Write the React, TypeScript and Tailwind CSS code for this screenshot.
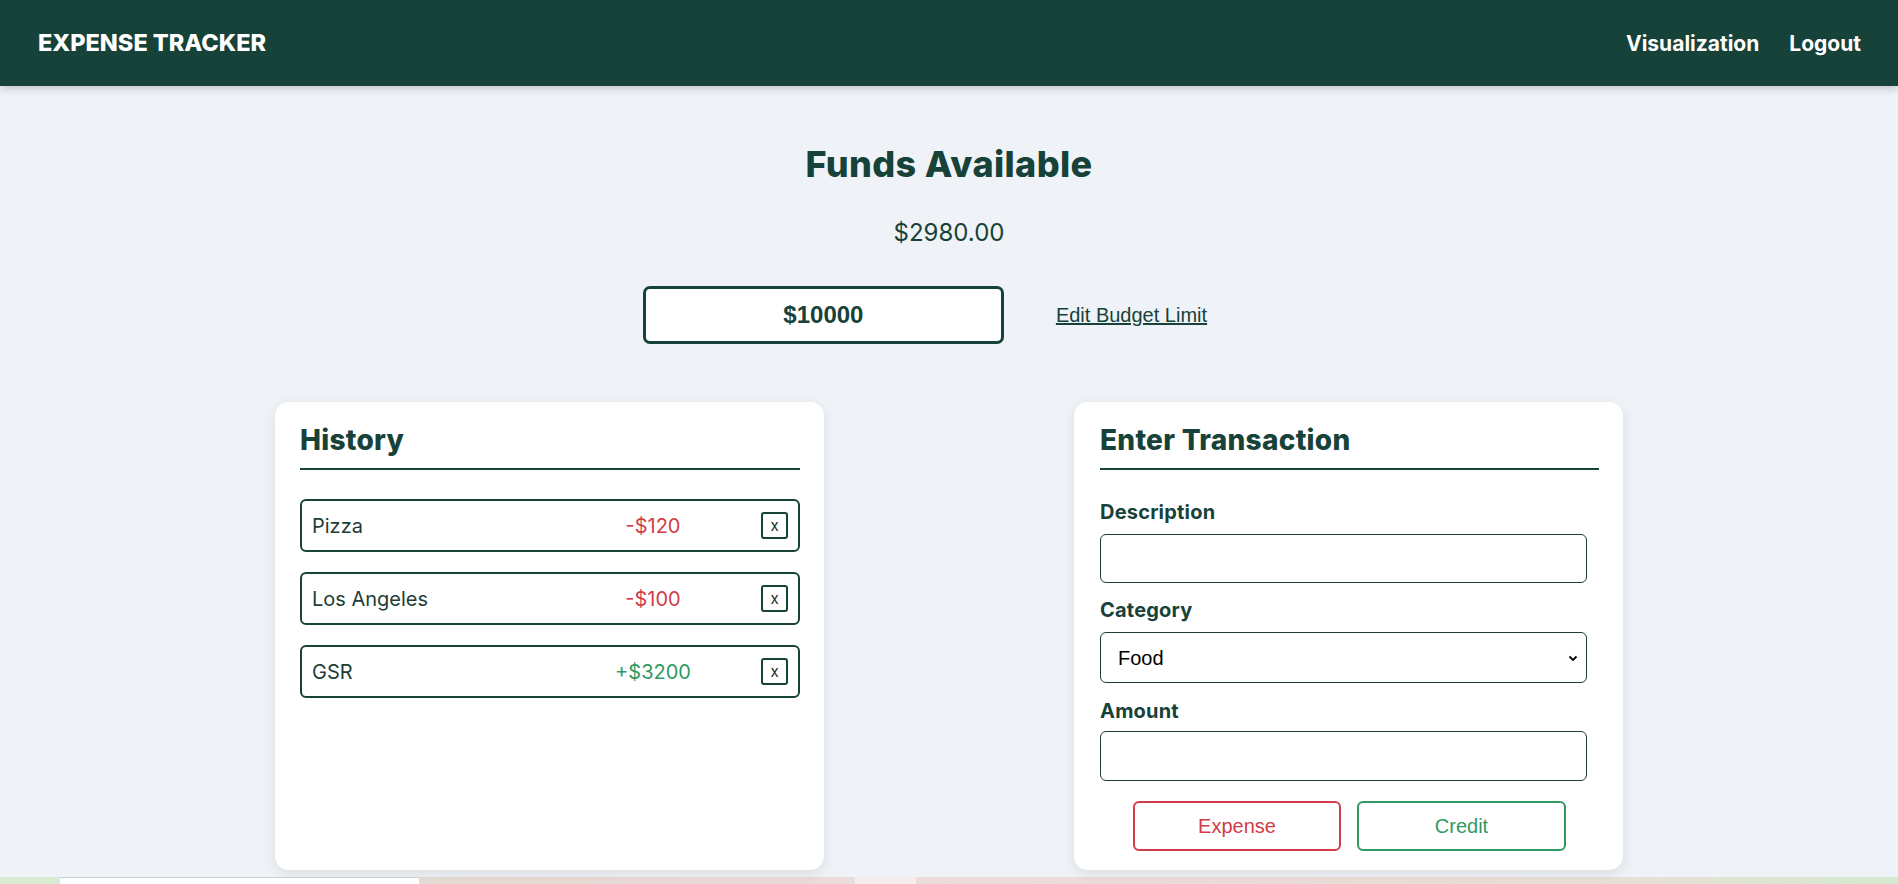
import React from "react";

const history = [
    {name: "Pizza", amount: -120},
    {name: "Los Angeles", amount: -100},
    {name: "GSR", amount: 3200},
];

const Navbar: React.FC = () => (
    <nav className="relative z-10 h-[86px] bg-[#174239] flex items-center justify-between pl-[38px] pr-[37px] shadow-[0_3px_8px_rgba(0,0,0,0.18)]">
        <div className="text-white text-[23.5px] font-extrabold leading-none">EXPENSE TRACKER</div>
        <div className="flex items-center gap-[30px] text-white text-[21px] font-bold leading-none">
            <a href="#">Visualization</a>
            <a href="#">Logout</a>
        </div>
    </nav>
);

const History: React.FC = () => (
    <section className="w-[549px] h-[468px] bg-white rounded-[14px] shadow-[0_4px_14px_rgba(0,0,0,0.09)] pl-[25px] pr-[24px] pt-[20px]">
        <h2 className="text-[28px] leading-[36px] font-extrabold tracking-[0.01em] text-[#174239] pb-[10px] border-b-2 border-[#174239]">History</h2>
        <ul className="mt-[29px] flex flex-col gap-[20px]">
            {history.map((item, i) => (
                <li
                    key={i}
                    className="h-[53px] border-2 border-[#174239] rounded-[6px] flex items-center pl-[10px] pr-[10px] text-[20px]"
                >
                    <span className="flex-1 text-[#1d3d36]">{item.name}</span>
                    <span
                        className={`w-[140px] text-center ${item.amount < 0 ? "text-[#d23b48]" : "text-[#2f9a5f]"}`}
                    >
                        {item.amount < 0 ? `-$${-item.amount}` : `+$${item.amount}`}
                    </span>
                    <button className="ml-[38px] w-[27px] h-[27px] border-2 border-[#174239] rounded-[3px] text-[15px] leading-none flex items-center justify-center text-[#1a2a27]">
                        x
                    </button>
                </li>
            ))}
        </ul>
    </section>
);

const TransactionForm: React.FC = () => (
    <section className="w-[549px] h-[468px] bg-white rounded-[14px] shadow-[0_4px_14px_rgba(0,0,0,0.09)] pl-[26px] pr-[24px] pt-[20px]">
        <h2 className="text-[28px] leading-[36px] font-extrabold tracking-[0.01em] text-[#174239] pb-[10px] border-b-2 border-[#174239]">Enter Transaction</h2>

        <label className="block mt-[28px] text-[20px] leading-[28px] font-bold tracking-[0.01em] text-[#174239]">Description</label>
        <input className="mt-[8px] block w-[487px] h-[49px] border border-[#1f3d37] rounded-[6px] bg-white px-3" />

        <label className="block mt-[13px] text-[20px] leading-[28px] font-bold tracking-[0.01em] text-[#174239]">Category</label>
        <div className="relative mt-[8px] w-[487px]">
            <select className="appearance-none block w-full h-[51px] border border-[#1f3d37] rounded-[6px] bg-white pl-[17px] font-['Liberation_Sans',sans-serif] text-[20px] text-black">
                <option>Food</option>
                <option>Travel</option>
                <option>Income</option>
            </select>
            <svg
                className="absolute right-[8px] top-1/2 -translate-y-1/2 pointer-events-none"
                width="12"
                height="12"
                viewBox="0 0 12 12"
            >
                <polyline points="2.5,4.5 6,8 9.5,4.5" fill="none" stroke="#000" strokeWidth="1.8" />
            </svg>
        </div>

        <label className="block mt-[14px] text-[20px] leading-[28px] font-bold tracking-[0.01em] text-[#174239]">Amount</label>
        <input className="mt-[6px] block w-[487px] h-[50px] border border-[#1f3d37] rounded-[6px] bg-white px-3" />

        <div className="mt-[20px] flex justify-center gap-[16px]">
            <button className="w-[208px] h-[50px] border-2 border-[#d23b48] rounded-[6px] text-[#d23b48] font-['Liberation_Sans',sans-serif] text-[20px]">
                Expense
            </button>
            <button className="w-[209px] h-[50px] border-2 border-[#2f9a5f] rounded-[6px] text-[#2f9a5f] font-['Liberation_Sans',sans-serif] text-[20px]">
                Credit
            </button>
        </div>
    </section>
);

export default function App() {
    return (
        <div className="min-h-screen bg-[#eff3f8] font-['Inter',sans-serif]">
            <Navbar/>

            <main className="flex flex-col items-center">
                <h1 className="mt-[56px] text-[36px] leading-[44px] font-extrabold tracking-[0.01em] text-[#174239]">Funds Available</h1>
                <p className="mt-[31px] text-[24px] leading-[32px] text-[#174239]">$2980.00</p>

                {/* Budget limit */}
                <div className="mt-[37px] flex items-center gap-[52px] pr-[48px]">
                    <div className="w-[361px] h-[58px] border-[3px] border-[#174239] rounded-[7px] bg-white flex items-center justify-center font-['Liberation_Sans',sans-serif] font-bold text-[24px] text-[#174239]">
                        $10000
                    </div>
                    <a href="#" className="font-['Liberation_Sans',sans-serif] text-[20px] underline text-[#174239]">
                        Edit Budget Limit
                    </a>
                </div>

                {/* Cards */}
                <div className="mt-[58px] flex gap-[250px]">
                    <History/>
                    <TransactionForm/>
                </div>
            </main>

            {/* next section peeking in */}
            <div className="mt-[7px] h-[24px] flex bg-[linear-gradient(to_right,#d7ebd2_0%,#d7ebd2_3%,#e8dcd6_25%,#ecdcdc_55%,#e9e0d6_85%,#d5ead0_100%)]">
                <div className="ml-[60px] w-[359px] bg-white border-t border-[#c8ccd3]"/>
                <div className="ml-[436px] w-[61px] bg-[#f4eeee]"/>
            </div>
        </div>
    );
}
